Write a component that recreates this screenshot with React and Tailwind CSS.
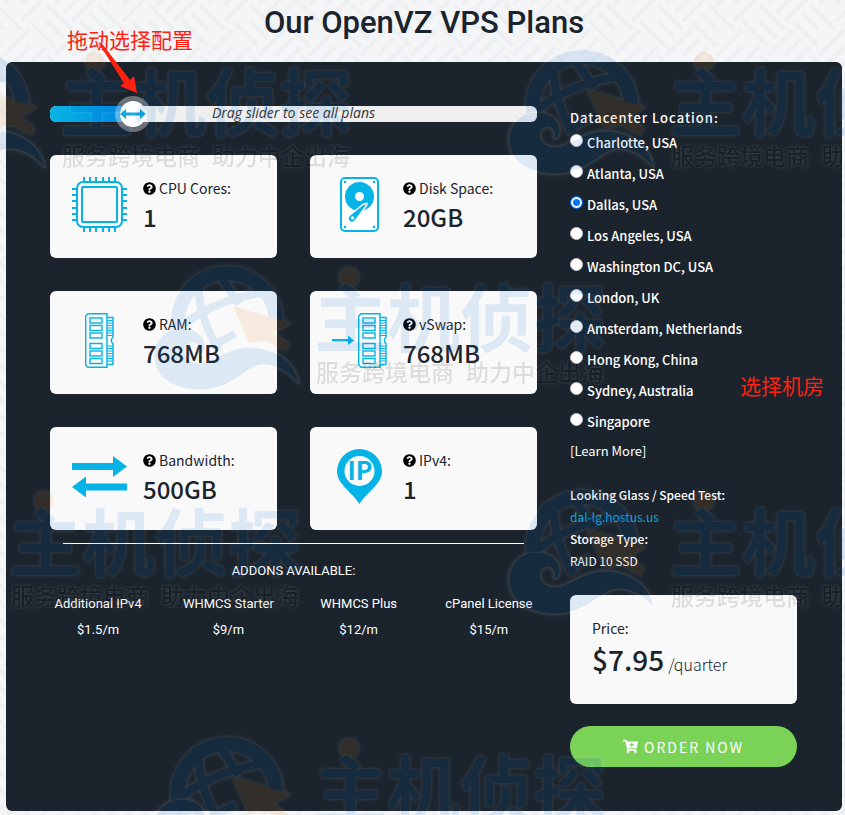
import { useState } from 'react';
import { FaCartPlus, FaQuestionCircle } from 'react-icons/fa';

const locations = [
  'Charlotte, USA',
  'Atlanta, USA',
  'Dallas, USA',
  'Los Angeles, USA',
  'Washington DC, USA',
  'London, UK',
  'Amsterdam, Netherlands',
  'Hong Kong, China',
  'Sydney, Australia',
  'Singapore',
];

const addons = [
  { name: 'Additional IPv4', price: '$1.5/m' },
  { name: 'WHMCS Starter', price: '$9/m' },
  { name: 'WHMCS Plus', price: '$12/m' },
  { name: 'cPanel License', price: '$15/m' },
];

const PINS = [12, 18, 24, 31, 37, 43];

const CpuIcon = () => (
  <svg viewBox="0 0 55 55" className="w-[55px] h-[55px]" fill="none" stroke="#05b3e6" strokeWidth="2">
    <rect x="5" y="5" width="45" height="45" rx="6" />
    <rect x="10" y="10" width="35" height="35" rx="1" />
    {PINS.map((p) => (
      <path key={p} d={`M${p} 0v5M${p} 50v5M0 ${p}h5M50 ${p}h5`} />
    ))}
  </svg>
);

const DiskIcon = () => (
  <svg viewBox="0 0 55 55" className="w-[55px] h-[55px]">
    <rect x="9" y="1" width="37" height="53" rx="4" fill="#fff" stroke="#05b3e6" strokeWidth="2" />
    <circle cx="27.500" cy="19.500" r="14.500" fill="#05b3e6" />
    <circle cx="27.500" cy="19.500" r="4.500" fill="#f9f9f9" />
    <path d="M34.500 28.500 23.500 43.500a4 4 0 1 1-5.500-5.500L31 27.500l4-1z" fill="#05b3e6" stroke="#f9f9f9" strokeWidth="1.500" />
    <circle cx="20.500" cy="41" r="1.800" fill="#f9f9f9" />
    <g fill="#05b3e6">
      <circle cx="13" cy="5" r="1.200" />
      <circle cx="42" cy="5" r="1.200" />
      <circle cx="13" cy="50" r="1.200" />
      <circle cx="42" cy="50" r="1.200" />
    </g>
  </svg>
);

const RamStick = () => (
  <g fill="none" stroke="#05b3e6" strokeWidth="1.400">
    <path d="M3 .7h19v53.600H3L.7 52V3z" />
    <path d="M22 4.500h6v20a3.500 3.500 0 0 0 0 6v21h-6" />
    {[5, 12.5, 20, 30.5, 38, 45.5].map((y) => (
      <rect key={y} x="5" y={y} width="12" height="5" />
    ))}
    <path
      d="M22 7.500h6M22 10h6M22 12.500h6M22 15h6M22 17.500h6M22 20h6M22 22.500h6M22 33h6M22 35.500h6M22 38h6M22 40.500h6M22 43h6M22 45.500h6M22 48h6"
      strokeWidth="1"
    />
  </g>
);

const RamIcon = () => (
  <svg viewBox="0 0 55 55" className="w-[55px] h-[55px]">
    <g transform="translate(13 0)">
      <RamStick />
    </g>
  </svg>
);

const SwapIcon = () => (
  <svg viewBox="0 0 55 55" className="w-[55px] h-[55px]">
    <path d="M0 26h16v-3.500l6 5-6 4.500v-3.500H0z" fill="#05b3e6" />
    <g transform="translate(26 0)">
      <RamStick />
    </g>
  </svg>
);

const BandwidthIcon = () => (
  <svg viewBox="0 0 55 55" className="w-[55px] h-[55px]" fill="#05b3e6">
    <path d="M0 14h41V7l14 10.500L41 28v-7H0z" />
    <path d="M55 34.500H14v-7L0 38l14 10.500v-7h41z" />
  </svg>
);

const IpIcon = () => (
  <svg viewBox="0 0 55 55" className="w-[55px] h-[55px]">
    <path d="M27.500 55C20 43 5 35 5 22.500a22.500 22.500 0 0 1 45 0C50 35 35 43 27.500 55z" fill="#05b3e6" />
    <circle cx="27.500" cy="22" r="15" fill="#f9f9f9" />
    <text x="28" y="31" textAnchor="middle" fill="#05b3e6" fontSize="25" fontWeight="700" fontFamily="'Noto Sans CJK SC', sans-serif">
      IP
    </text>
  </svg>
);

const specs = [
  { label: 'CPU Cores:', value: '1', Icon: CpuIcon },
  { label: 'Disk Space:', value: '20GB', Icon: DiskIcon },
  { label: 'RAM:', value: '768MB', Icon: RamIcon },
  { label: 'vSwap:', value: '768MB', Icon: SwapIcon },
  { label: 'Bandwidth:', value: '500GB', Icon: BandwidthIcon },
  { label: 'IPv4:', value: '1', Icon: IpIcon },
];

const SpecCard = ({ label, value, Icon }) => (
  <div className="flex gap-4 rounded-md bg-[#f9f9f9] px-[22px] pt-[22px] pb-[26px] text-[#1b242d]">
    <Icon />
    <div>
      <p className="flex items-center gap-[3px] text-sm leading-[22px]">
        <FaQuestionCircle className="h-[13px] w-[13px] text-black" />
        {label}
      </p>
      <p className="pt-[3px] text-2xl leading-[30px] font-medium">{value}</p>
    </div>
  </div>
);

/* Woven diagonal texture behind the page */
const Texture = () => (
  <svg className="absolute inset-0 h-full w-full" aria-hidden="true">
    <defs>
      <pattern id="weave" width="72" height="72" patternUnits="userSpaceOnUse" patternTransform="rotate(45)">
        <path
          d="M0 6h36M0 18h24M0 30h36M42 0v36M54 12v24M66 0v36M36 42h36M48 54h24M36 66h36M6 36v36M18 36v24M30 36v36"
          stroke="#eeeff1"
          strokeWidth="4"
          fill="none"
        />
      </pattern>
    </defs>
    <rect width="100%" height="100%" fill="url(#weave)" />
  </svg>
);

const Watermark = ({ className }) => (
  <div className={`absolute h-[130px] w-[460px] opacity-[0.11] ${className}`}>
    <svg viewBox="0 0 220 130" className="absolute top-0 left-0 h-[130px] w-[220px] overflow-visible [filter:drop-shadow(0_0_1px_#fff)_drop-shadow(0_0_2px_#fff)]">
      <g fill="none" stroke="#0064c8" strokeWidth="8">
        <path d="M26 70A49 49 0 1 1 123 60" strokeWidth="14" />
        <path d="M46 20Q44 52 66 88M66 12L86 42M28 64Q68 34 118 30M58 84L82 72" />
      </g>
      <path d="M80 44 138 61 120 71 136 82 132 89 114 79 96 81z" fill="#eb8214" />
      <path
        d="M1 94C1 78 13 66 28 66C42 66 52 74 52 84C52 90 49 93 45 92C49 84 42 79 36 82C28 88 33 100 45 101C60 102 72 86 95 85C120 85 142 98 146 122C135 108 120 102 108 103C92 105 80 127 48 128C20 128 1 115 1 94z"
        fill="#0064c8"
        stroke="#fff"
        strokeWidth="1"
      />
      <circle cx="196" cy="15" r="9.500" fill="#eb8214" />
    </svg>
    <p className="absolute top-4 left-[161px] text-[73px] leading-[72px] font-bold whitespace-nowrap text-[#0064c8] [text-shadow:0_0_2px_#fff,0_0_4px_#fff]">
      主机侦探
    </p>
    <p className="absolute top-[97px] left-[163px] flex gap-3 text-[23px] leading-6 font-medium whitespace-nowrap text-black [text-shadow:0_0_2px_#fff,0_0_4px_#fff]">
      <span>服务跨境电商</span>
      <span>助力中企出海</span>
    </p>
  </div>
);

const PlanSlider = ({ value, onChange }) => (
  <div className="relative h-4 rounded-md bg-[#efefef]">
    <div
      className="h-4 rounded-l-md bg-linear-to-r from-[#0cb4e4] to-[#0084e0]"
      style={{ width: `${value}%` }}
    />
    <p className="absolute inset-0 text-center font-['Open_Sans',sans-serif] text-sm leading-[14px] text-[#333] italic">
      Drag slider to see all plans
    </p>
    <div
      className="absolute top-1/2 flex h-9 w-9 -translate-x-1/2 -translate-y-1/2 items-center justify-center rounded-full bg-white/35"
      style={{ left: `${value}%` }}
    >
      <div className="flex h-[26px] w-[26px] items-center justify-center rounded-full bg-white">
        <svg viewBox="0 0 26 12" className="h-3 w-[26px]" fill="#12a9dd">
          <path d="M0 6 6 1v3.500h14V1l6 5-6 5V7.500H6V11z" />
        </svg>
      </div>
    </div>
    <input
      type="range"
      min="0"
      max="100"
      value={value}
      onChange={(e) => onChange(Number(e.target.value))}
      aria-label="Drag slider to see all plans"
      className="absolute inset-0 h-4 w-full cursor-pointer opacity-0"
    />
  </div>
);

const App = () => {
  const [plan, setPlan] = useState(17);
  const [location, setLocation] = useState('Dallas, USA');

  return (
    <div className="relative min-h-screen overflow-hidden bg-[#f4f5f7] pr-[3px] pb-1 pl-1.5 font-['Noto_Sans_CJK_SC',sans-serif]">
      <Texture />

      <h1 className="relative pt-[3px] pb-[19px] text-center font-['Roboto',sans-serif] text-[31px] leading-10 font-medium text-[#1b242d]">
        Our OpenVZ VPS Plans
      </h1>

      <main className="relative grid grid-cols-3 gap-x-[33px] rounded-md bg-[#1b242d] pt-11 pr-[45px] pb-11 pl-11 text-white">
        <section className="col-span-2">
          <PlanSlider value={plan} onChange={setPlan} />

          <div className="grid grid-cols-2 gap-[33px] pt-[33px]">
            {specs.map((spec) => (
              <SpecCard key={spec.label} {...spec} />
            ))}
          </div>

          <hr className="mx-[13px] mt-[13px] border-white" />

          <div className="text-center font-['Roboto',sans-serif] text-[13px]">
            <h2 className="pt-4 leading-[22px]">ADDONS AVAILABLE:</h2>
            <ul className="-mx-[17px] grid grid-cols-4 pt-[9px]">
              {addons.map((addon) => (
                <li key={addon.name} className="leading-[26px]">
                  <p>{addon.name}</p>
                  <p>{addon.price}</p>
                </li>
              ))}
            </ul>
          </div>
        </section>

        <section className="text-xs leading-[22px]">
          <fieldset>
            <legend className="pt-px text-[13px] font-medium tracking-[1px]">Datacenter Location:</legend>
            {locations.map((name) => (
              <label key={name} className="flex h-[31px] items-start gap-1 text-[13px] font-medium whitespace-nowrap">
                <input
                  type="radio"
                  name="location"
                  checked={location === name}
                  onChange={() => setLocation(name)}
                  className="mt-[5px] h-[13px] w-[13px] appearance-none rounded-full border border-[#ccc] bg-white checked:border-[#0075ff] checked:bg-[#0075ff] checked:shadow-[inset_0_0_0_2px_#fff]"
                />
                <span className="pt-[3px]">{name}</span>
              </label>
            ))}
          </fieldset>
          <a href="#locations" className="block pt-px text-[13px]">[Learn More]</a>

          <dl className="pt-[22px]">
            <dt className="font-medium">Looking Glass / Speed Test:</dt>
            <dd>
              <a href="#dal-lg" className="text-[#0ba5dc]">dal-lg.hostus.us</a>
            </dd>
            <dt className="font-medium">Storage Type:</dt>
            <dd>RAID 10 SSD</dd>
          </dl>

          <div className="mt-[23px] rounded-md bg-[#f9f9f9] px-[22px] pt-[22px] pb-[25px] text-[#1b242d]">
            <p className="text-sm leading-[22px]">Price:</p>
            <p className="flex items-baseline gap-1">
              <span className="text-[28px] leading-10 font-medium">$7.95</span>
              <span className="text-base leading-5 font-light">/quarter</span>
            </p>
          </div>

          <button
            type="button"
            className="mt-[22px] flex h-[41px] w-full items-center justify-center gap-1.5 rounded-full bg-[#7ad257] text-sm tracking-[2px] text-white"
          >
            <FaCartPlus className="h-[15px] w-[15px]" />
            ORDER NOW
          </button>
        </section>
      </main>

      <div className="pointer-events-none absolute inset-0 overflow-hidden" aria-hidden="true">
        <Watermark className="top-[46px] -left-[101px]" />
        <Watermark className="top-[46px] left-[508px]" />
        <Watermark className="top-[262px] left-[153px]" />
        <Watermark className="top-[486px] -left-[152px]" />
        <Watermark className="top-[486px] left-[508px]" />
        <Watermark className="top-[733px] left-[153px]" />
      </div>

      {/* Red notes on top of the panel */}
      <div className="pointer-events-none absolute inset-0 text-[21px] leading-6 text-[#ff2010]">
        <p className="absolute top-[27px] left-[67px] whitespace-nowrap">拖动选择配置</p>
        <svg viewBox="0 0 40 54" className="absolute top-[42px] left-[98px] h-[54px] w-10" fill="#ff2010">
          <path d="M0 0 5 3 32 38 36 34 39 51 22 44 26 41z" />
        </svg>
        <p className="absolute top-[373px] left-[740px] whitespace-nowrap">选择机房</p>
      </div>
    </div>
  );
};

export default App;
